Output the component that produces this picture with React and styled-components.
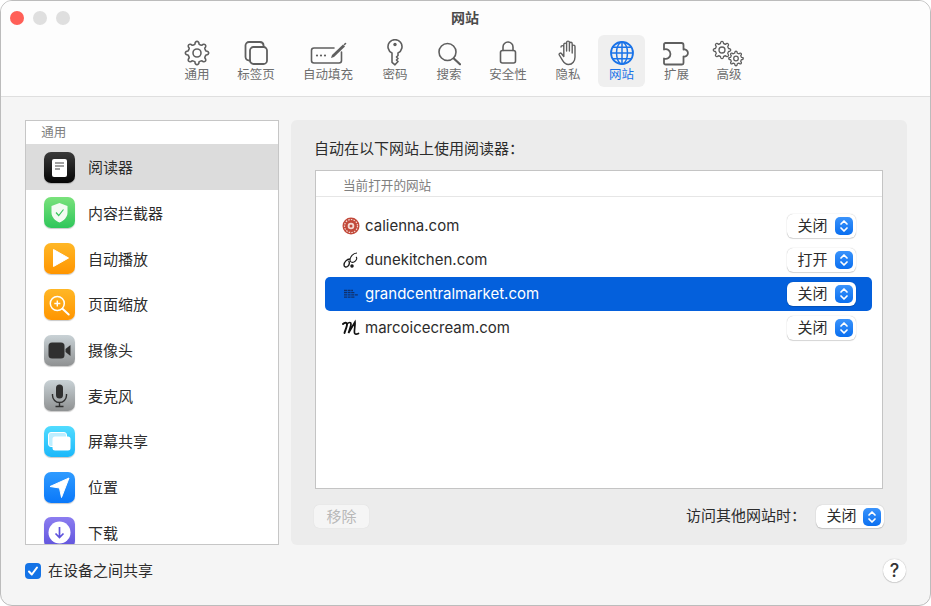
import React from 'react';
import styled, { createGlobalStyle } from 'styled-components';

const FONT = `Inter, "Noto Sans CJK SC", "Liberation Sans", sans-serif`;
const STROKE = '#5f5f5f';

const GlobalStyle = createGlobalStyle`
  html, body { margin: 0; padding: 0; background: #fff; }
  body { width: 931px; height: 606px; overflow: hidden; font-family: ${FONT}; }
  * { box-sizing: border-box; }
`;

const Window = styled.div`
  width: 931px;
  height: 606px;
  display: flex;
  flex-direction: column;
  border: 1px solid #bcbcbc;
  border-radius: 12px;
  overflow: hidden;
  background: #f5f5f5;
`;

const Head = styled.header`
  background: #fdfdfd;
  border-bottom: 1px solid #dfdfdf;
  height: 96px;
  flex: none;
`;

const TitleBar = styled.div`
  height: 34px;
  display: grid;
  grid-template-columns: 1fr auto 1fr;
  align-items: center;
  padding: 0 10px 0 9px;
`;

const Lights = styled.div`
  display: flex;
  gap: 9px;
`;

const Light = styled.span`
  width: 14px;
  height: 14px;
  border-radius: 50%;
  background: ${p => p.$color};
`;

const Title = styled.div`
  font-size: 14px;
  font-weight: 700;
  color: #4a4a4a;
  padding-bottom: 2px;
`;

const Toolbar = styled.nav`
  display: flex;
  padding-left: 170px;
`;

const ToolCell = styled.div`
  width: ${p => p.$w}px;
  display: flex;
  justify-content: center;
`;

const ToolItem = styled.div`
  width: 47px;
  height: 52px;
  padding-top: 4px;
  border-radius: 6px;
  display: flex;
  flex-direction: column;
  align-items: center;
  background: ${p => (p.$active ? '#efefef' : 'transparent')};
  color: ${p => (p.$active ? '#1a73e8' : '#6e6e6e')};
  svg { display: block; flex: none; }
`;

const ToolLabel = styled.span`
  font-size: 12.5px;
  line-height: 15px;
  white-space: nowrap;
`;

const Body = styled.main`
  flex: 1;
  padding: 23px 23px 0 24px;
  display: flex;
  flex-direction: column;
`;

const Columns = styled.div`
  display: flex;
  gap: 12px;
  height: 425px;
`;

const Sidebar = styled.aside`
  width: 254px;
  flex: none;
  background: #fff;
  border: 1px solid #c6c6c6;
  overflow: hidden;
`;

const SideHeader = styled.div`
  height: 23.45px;
  padding: 0 0 2px 15.3px;
  display: flex;
  align-items: center;
  font-size: 12.5px;
  color: #808080;
`;

const SideRow = styled.div`
  height: 45.7px;
  padding-left: 18px;
  display: flex;
  align-items: center;
  gap: 13px;
  font-size: 15px;
  color: #2c2c2c;
  background: ${p => (p.$selected ? '#dcdcdc' : 'transparent')};
`;

const SideLabel = styled.span`
  padding-bottom: 1px;
`;

const AppIcon = styled.div`
  width: 31px;
  height: 31px;
  flex: none;
  border-radius: 7px;
  background: linear-gradient(${p => p.$from}, ${p => p.$to});
  box-shadow: 0 1px 1px rgba(0, 0, 0, 0.22);
  svg { display: block; }
`;

const Panel = styled.section`
  flex: 1;
  background: #ececec;
  border-radius: 6px;
  padding: 19px 24px 0;
  display: flex;
  flex-direction: column;
`;

const PanelTitle = styled.div`
  font-size: 15px;
  line-height: 20px;
  color: #2c2c2c;
  margin: 0 0 11px -1px;
`;

const Table = styled.div`
  height: 319px;
  background: #fff;
  border: 1px solid #c4c4c4;
  display: flex;
  flex-direction: column;
`;

const TableHeader = styled.div`
  height: 26px;
  flex: none;
  padding: 1px 0 0 27px;
  display: flex;
  align-items: center;
  font-size: 12.6px;
  color: #808080;
  border-bottom: 1px solid #e6e6e6;
`;

const SiteList = styled.div`
  padding: 12px 10px 0 9px;
`;

const SiteRow = styled.div`
  height: 34px;
  padding: 0 16px 0 17px;
  display: flex;
  align-items: center;
  gap: 5px;
  border-radius: 5px;
  font-size: 15px;
  color: ${p => (p.$selected ? '#fff' : '#2c2c2c')};
  background: ${p => (p.$selected ? '#0460dc' : 'transparent')};
  svg { flex: none; }
`;

const SiteName = styled.span`
  flex: 1;
  padding-bottom: 1px;
`;

const Popup = styled.div`
  width: ${p => p.$w}px;
  height: ${p => p.$h}px;
  padding: 0 3px 0 10.5px;
  display: flex;
  align-items: center;
  justify-content: space-between;
  border-radius: 6px;
  background: #fff;
  font-size: 15px;
  color: #2c2c2c;
  box-shadow: 0 0 1px rgba(0, 0, 0, 0.3), 0 1px 1px rgba(0, 0, 0, 0.14);
`;

const PopupValue = styled.span`
  padding-bottom: 4px;
`;

const Stepper = styled.span`
  width: 18px;
  height: 18px;
  border-radius: 5px;
  background: linear-gradient(#3a93fb, #0a6ff0);
  display: flex;
  align-items: center;
  justify-content: center;
`;

const PanelFooter = styled.div`
  display: flex;
  align-items: center;
  justify-content: space-between;
  margin-top: 15px;
`;

const RemoveButton = styled.button`
  width: 55px;
  height: 23px;
  margin-left: -1px;
  padding: 0 0 4px;
  border: 0;
  border-radius: 5px;
  background: #f5f5f5;
  box-shadow: 0 0 1px rgba(0, 0, 0, 0.12);
  font: 15px ${FONT};
  color: #b8b8b8;
`;

const VisitGroup = styled.div`
  display: flex;
  align-items: center;
  gap: 10px;
  margin-right: -1px;
  font-size: 15px;
  color: #2c2c2c;
`;

const VisitLabel = styled.span`
  padding-bottom: 4px;
`;

const Footer = styled.footer`
  flex: 1;
  display: flex;
  align-items: center;
  justify-content: space-between;
  padding-bottom: 9px;
`;

const ShareLabel = styled.label`
  display: flex;
  align-items: center;
  gap: 7px;
  font-size: 15px;
  color: #2c2c2c;
`;

const ShareText = styled.span`
  padding-bottom: 2px;
`;

const CheckBox = styled.span`
  width: 16px;
  height: 16px;
  border-radius: 4px;
  background: #1473e6;
  display: flex;
  align-items: center;
  justify-content: center;
`;

const HelpButton = styled.button`
  width: 23px;
  height: 23px;
  margin-right: 1px;
  padding: 0;
  border: 0;
  border-radius: 50%;
  background: #fff;
  box-shadow: 0 0 1px rgba(0, 0, 0, 0.35), 0 1px 1px rgba(0, 0, 0, 0.12);
  font: 500 18px ${FONT};
  color: #333;
`;

// cog outline: one rounded lobe per tooth, joined by shallow valleys
const gearPath = (cx, cy, outer, inner, teeth) => {
  const step = (Math.PI * 2) / teeth;
  const at = (a, r) => `${(cx + r * Math.cos(a)).toFixed(2)} ${(cy + r * Math.sin(a)).toFixed(2)}`;
  let d = '';
  for (let i = 0; i < teeth; i++) {
    const a = i * step - Math.PI / 2;
    const w = step * 0.28;
    const tip = outer * 1.06;
    d += i ? '' : `M${at(a - w, inner)} `;
    d += `C${at(a - w * 0.75, tip)} ${at(a + w * 0.75, tip)} ${at(a + w, inner)} `;
    d += `Q${at(a + step / 2, inner * 0.94)} ${at(a + step - w, inner)} `;
  }
  return `${d}Z`;
};

const line = { fill: 'none', stroke: STROKE, strokeWidth: 1.6, strokeLinecap: 'round', strokeLinejoin: 'round' };

const GeneralIcon = () => (
  <svg width="28" height="28" viewBox="0 0 28 28" {...line}>
    <path d={gearPath(14, 14, 12, 9.2, 8)} />
    <circle cx="14" cy="14" r="4" />
  </svg>
);

const TabsIcon = () => (
  <svg width="26" height="28" viewBox="0 0 26 28" {...line}>
    <rect x="7" y="8" width="17" height="17" rx="3.5" strokeWidth="1.8" />
    <path d="M7 21.5h-.5A4 4 0 0 1 2.5 18V6.5a3.5 3.5 0 0 1 3.5-3.5h11a3.8 3.8 0 0 1 3.6 3.6V8" strokeWidth="1.8" />
  </svg>
);

const AutofillIcon = () => (
  <svg width="37" height="28" viewBox="0 0 37 28" {...line}>
    <path d="M24 9H4a2.5 2.5 0 0 0-2.5 2.5v10A2.5 2.5 0 0 0 4 24h25a2.5 2.5 0 0 0 2.5-2.5V13" />
    <path d="M21 19l1-3L33 5.5l2 2L24 18z" fill={STROKE} stroke="none" />
    <path d="M34.5 5.5l1-1" />
    <g fill={STROKE} stroke="none">
      <circle cx="7" cy="16.500" r="1.100" />
      <circle cx="11" cy="16.500" r="1.100" />
      <circle cx="15" cy="16.500" r="1.100" />
    </g>
  </svg>
);

const KeyIcon = () => (
  <svg width="18" height="28" viewBox="0 0 18 28" {...line}>
    <path d="M6 14A7 7 0 1 1 12 14v2.500l-1.500 1.500 1.500 1.500-1.500 1.500 1.500 1.500-3 3.300-3-2.500Z" />
    <circle cx="9" cy="5.500" r="1.700" fill={STROKE} stroke="none" />
  </svg>
);

const SearchIcon = () => (
  <svg width="24" height="28" viewBox="0 0 24 28" {...line}>
    <circle cx="10.500" cy="13" r="8.500" />
    <path d="M16.800 19.500L23 25.300" strokeWidth="2.200" />
  </svg>
);

const LockIcon = () => (
  <svg width="18" height="28" viewBox="0 0 18 28" {...line}>
    <rect x="1.500" y="11.500" width="15" height="12.500" rx="2" />
    <path d="M4 11.500V8a5 5 0 0 1 10 0v3.500" />
  </svg>
);

const HandIcon = () => (
  <svg width="20" height="28" viewBox="0 0 20 28" {...line}>
    <path d="M5.800 14V5.500a1.400 1.400 0 0 1 2.800 0V12M8.600 12V3.500a1.400 1.400 0 0 1 2.800 0V12M11.400 12V4.700a1.400 1.400 0 0 1 2.800 0V14M14.200 14V7.500a1.400 1.400 0 0 1 2.800 0V18c0 4-2.500 7.500-6.500 7.500-3 0-4.500-1.500-5.800-3.800L1.300 16c-.7-1.500 1.200-2.600 2.300-1.300l2.200 2.800V8a1.400 1.400 0 0 0-2.800 0" strokeWidth="1.400" />
  </svg>
);

const GlobeIcon = () => (
  <svg width="24" height="28" viewBox="0 0 24 28" fill="none" stroke="#1a73e8" strokeWidth="1.500">
    <circle cx="12" cy="14" r="11" strokeWidth="1.800" />
    <ellipse cx="12" cy="14" rx="5.500" ry="11" />
    <path d="M12 3v22M1 14h22M3 8.300h18M3 19.700h18" />
  </svg>
);

const PuzzleIcon = () => (
  <svg width="30" height="28" viewBox="0 0 30 28" {...line} strokeWidth="1.800">
    <path d="M3.500 4h16a2 2 0 0 1 2 2v4.500a3.600 3.600 0 1 1 0 7V24a1.500 1.500 0 0 1-1.500 1.500H3.500A1.500 1.500 0 0 1 2 24v-4.500a4.800 4.800 0 1 0 0-9V5.500A1.500 1.500 0 0 1 3.500 4z" />
  </svg>
);

const AdvancedIcon = () => (
  <svg width="34" height="28" viewBox="0 0 34 28" {...line} strokeWidth="1.300">
    <path d={gearPath(10, 11, 9, 6.8, 8)} />
    <circle cx="10" cy="11" r="3" />
    <path d={gearPath(24, 19.5, 7.5, 5.6, 8)} />
    <circle cx="24" cy="19.500" r="2.300" />
  </svg>
);

const TOOLS = [
  { label: '通用', w: 52, Icon: GeneralIcon },
  { label: '标签页', w: 66, Icon: TabsIcon },
  { label: '自动填充', w: 78, Icon: AutofillIcon },
  { label: '密码', w: 56, Icon: KeyIcon },
  { label: '搜索', w: 52, Icon: SearchIcon },
  { label: '安全性', w: 66, Icon: LockIcon },
  { label: '隐私', w: 54, Icon: HandIcon },
  { label: '网站', w: 53, Icon: GlobeIcon, active: true },
  { label: '扩展', w: 57, Icon: PuzzleIcon },
  { label: '高级', w: 48, Icon: AdvancedIcon },
];

const Glyph = ({ children }) => (
  <svg width="31" height="31" viewBox="0 0 31 31">{children}</svg>
);

const SIDE_ITEMS = [
  {
    label: '阅读器', from: '#3a3a3a', to: '#050505', selected: true,
    glyph: (
      <>
        <rect x="8" y="7" width="15" height="18" rx="2" fill="#fff" />
        <path d="M11 11h9M11 14h9M11 17h5" stroke="#444" strokeWidth="1.200" />
      </>
    ),
  },
  {
    label: '内容拦截器', from: '#7ae27c', to: '#2fc65a',
    glyph: (
      <>
        <path d="M15.500 6l8 3v6.500c0 4.500-3.300 8-8 10-4.700-2-8-5.500-8-10V9z" fill="#f2fbf2" />
        <path d="M12 15.500l2.700 3 4.800-6" fill="none" stroke="#34c759" strokeWidth="1.200" />
      </>
    ),
  },
  {
    label: '自动播放', from: '#ffb726', to: '#ff9500',
    glyph: <path d="M9.500 6.500v17L24.500 15z" fill="#fff" stroke="#fff" strokeLinejoin="round" />,
  },
  {
    label: '页面缩放', from: '#ffb726', to: '#ff9500',
    glyph: (
      <>
        <circle cx="13.300" cy="14.500" r="7" fill="none" stroke="#fff" strokeWidth="1.500" />
        <path d="M10.300 14.500h6M13.300 11.500v6" stroke="#fff" strokeWidth="1.400" />
        <path d="M18.500 19.800L24.700 25.500" stroke="#fff" strokeWidth="2" strokeLinecap="round" />
      </>
    ),
  },
  {
    label: '摄像头', from: '#c9d2d6', to: '#8f9192',
    glyph: (
      <>
        <rect x="4.500" y="7.500" width="16" height="16" rx="3.500" fill="#2f2f2f" />
        <path d="M21.500 14l5-4v11l-5-4z" fill="#2f2f2f" />
      </>
    ),
  },
  {
    label: '麦克风', from: '#c9d2d6', to: '#8f9192',
    glyph: (
      <>
        <rect x="12" y="4.500" width="7" height="14" rx="3.500" fill="#2f2f2f" />
        <path d="M8.500 14v1.500a7 7 0 0 0 14 0V14M15.500 22.500v3.500M11.500 26.500h8" fill="none" stroke="#2f2f2f" strokeWidth="1.400" />
      </>
    ),
  },
  {
    label: '屏幕共享', from: '#52dcff', to: '#1bb8fa',
    glyph: (
      <>
        <rect x="4.500" y="6.500" width="18" height="14" rx="2.500" fill="#bdeeff" stroke="#fff" />
        <rect x="8.500" y="10.500" width="18" height="14" rx="2.500" fill="#fff" />
      </>
    ),
  },
  {
    label: '位置', from: '#2f9bff', to: '#0a78fa',
    glyph: <path d="M25 6L6 14.500l9.500 1.500 2 9.500z" fill="#fff" stroke="#fff" strokeLinejoin="round" />,
  },
  {
    label: '下载', from: '#8c7df0', to: '#5e52dc',
    glyph: (
      <>
        <circle cx="15.500" cy="15.500" r="11" fill="#fff" />
        <path d="M15.500 10v10M11.500 16.500l4 4 4-4" fill="none" stroke="#5e52dc" strokeWidth="1.700" />
      </>
    ),
  },
];

const CaliennaIcon = () => (
  <svg width="18" height="18" viewBox="0 0 18 18">
    <circle cx="9" cy="9" r="8.500" fill="#c2493a" />
    <circle cx="9" cy="9" r="6.500" fill="none" stroke="#f3d9d2" strokeWidth="1.200" strokeDasharray="1.500 1.200" />
    <circle cx="9" cy="9" r="3.300" fill="#f3d9d2" />
    <circle cx="9" cy="9" r="1.500" fill="#c2493a" />
  </svg>
);

const DuneIcon = () => (
  <svg width="18" height="18" viewBox="0 0 18 18" fill="none" stroke="#1b1b1b" strokeWidth="1.100">
    <path d="M15 2C11 2 8 6 8 9c0 2 2 3 4 2 2.500-1.200 3.500-4 2-5" />
    <path d="M8 8C5 8 2 11 2 14c0 2 2 2.500 3.500 1.500 2-1.500 2.500-4.500 1-5.500" strokeWidth="1.400" />
    <circle cx="10" cy="15" r="1.200" fill="#1b1b1b" />
  </svg>
);

const MarketIcon = () => (
  <svg width="18" height="18" viewBox="0 0 18 18" fill="none" stroke="#10306a" strokeWidth="1.300">
    <path d="M2 5.500h9M2 7.700h11M2 9.900h14M2 12.100h11" strokeDasharray="3 .6" />
  </svg>
);

const MarcoIcon = () => (
  <svg width="18" height="18" viewBox="0 0 18 18" fill="none" stroke="#111" strokeLinecap="round">
    <path d="M1 5c2-2 4-1.500 4 .5S3 12 2.500 14" strokeWidth="1.900" />
    <path d="M5 5c2-2 4-2 4 0s-2 7-2.500 9L13 3c.5 3-1 8-.5 11 .2 1.500 2 1.500 4 .5" strokeWidth="1.700" />
  </svg>
);

const SITES = [
  { name: 'calienna.com', value: '关闭', Icon: CaliennaIcon },
  { name: 'dunekitchen.com', value: '打开', Icon: DuneIcon },
  { name: 'grandcentralmarket.com', value: '关闭', Icon: MarketIcon, selected: true },
  { name: 'marcoicecream.com', value: '关闭', Icon: MarcoIcon },
];

const Select = ({ value, w = 69, h = 24 }) => (
  <Popup $w={w} $h={h}>
    <PopupValue>{value}</PopupValue>
    <Stepper>
      <svg width="10" height="14" viewBox="0 0 10 14" fill="none" stroke="#fff" strokeWidth="1.700" strokeLinecap="round" strokeLinejoin="round">
        <path d="M2 5l3-3 3 3M2 9l3 3 3-3" />
      </svg>
    </Stepper>
  </Popup>
);

const App = () => (
  <Window>
    <GlobalStyle />
    <Head>
      <TitleBar>
        <Lights>
          <Light $color="#ff5f57" />
          <Light $color="#dfdfdf" />
          <Light $color="#dfdfdf" />
        </Lights>
        <Title>网站</Title>
        <span />
      </TitleBar>
      <Toolbar>
        {TOOLS.map(({ label, w, Icon, active }) => (
          <ToolCell key={label} $w={w}>
            <ToolItem $active={active}>
              <Icon />
              <ToolLabel>{label}</ToolLabel>
            </ToolItem>
          </ToolCell>
        ))}
      </Toolbar>
    </Head>
    <Body>
      <Columns>
        <Sidebar>
          <SideHeader>通用</SideHeader>
          {SIDE_ITEMS.map(item => (
            <SideRow key={item.label} $selected={item.selected}>
              <AppIcon $from={item.from} $to={item.to}>
                <Glyph>{item.glyph}</Glyph>
              </AppIcon>
              <SideLabel>{item.label}</SideLabel>
            </SideRow>
          ))}
        </Sidebar>
        <Panel>
          <PanelTitle>自动在以下网站上使用阅读器：</PanelTitle>
          <Table>
            <TableHeader>当前打开的网站</TableHeader>
            <SiteList>
              {SITES.map(({ name, value, Icon, selected }) => (
                <SiteRow key={name} $selected={selected}>
                  <Icon />
                  <SiteName>{name}</SiteName>
                  <Select value={value} />
                </SiteRow>
              ))}
            </SiteList>
          </Table>
          <PanelFooter>
            <RemoveButton>移除</RemoveButton>
            <VisitGroup>
              <VisitLabel>访问其他网站时：</VisitLabel>
              <Select value="关闭" w={68} h={23} />
            </VisitGroup>
          </PanelFooter>
        </Panel>
      </Columns>
      <Footer>
        <ShareLabel>
          <CheckBox>
            <svg width="12" height="12" viewBox="0 0 12 12" fill="none" stroke="#fff" strokeWidth="2" strokeLinecap="round" strokeLinejoin="round">
              <path d="M2 6.500l2.800 3L10 2.500" />
            </svg>
          </CheckBox>
          <ShareText>在设备之间共享</ShareText>
        </ShareLabel>
        <HelpButton>?</HelpButton>
      </Footer>
    </Body>
  </Window>
);

export default App;
